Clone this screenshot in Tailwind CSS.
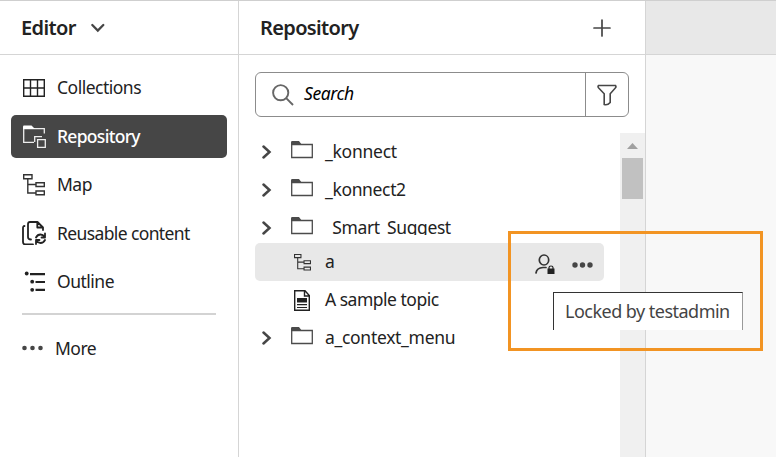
<!DOCTYPE html>
<html lang="en">
<head>
<meta charset="utf-8">
<title>Editor</title>
<script src="https://cdn.jsdelivr.net/npm/@tailwindcss/browser@4"></script>
</head>
<body class="bg-white">
<svg class="hidden">
  <symbol id="folder" viewBox="0 0 22 18"><path d="M.7 3.500V16.500H21.300V3.500Z" fill="none" stroke="#4b4b4b" stroke-width="1.300"/><path d="M0 4V1.200Q0 0 1.200 0H8L11 4Z" fill="#4b4b4b"/></symbol>
  <symbol id="chev" viewBox="0 0 10 14"><path d="M1.500 1.500L7.500 7L1.500 12.500" fill="none" stroke="#464646" stroke-width="2.500" stroke-linecap="round"/></symbol>
  <symbol id="map" viewBox="0 0 22 22"><g fill="none" stroke="#333" stroke-width="1.400"><path d="M.7.700H9V4.700H.700ZM13 8.700H21.300V12.500H13ZM13 17H21.300V20.800H13ZM4.800 4.700V19H13M4.800 10.500H13"/></g></symbol>
</svg>
<div class="relative flex h-[457px] w-[776px] overflow-hidden border-t border-[#cfcfcf] font-['Noto_Sans','Open_Sans',sans-serif] text-[17.5px] tracking-[-0.5px] text-[#222]">
  <nav class="w-[239px] shrink-0 border-r border-[#d5d5d5]">
    <header class="flex h-[54px] items-center border-b border-[#d5d5d5] pl-[21px]">
      <h1 class="w-[69px] text-[20px] font-semibold tracking-[-0.600px]">Editor</h1>
      <svg class="h-3 w-4" viewBox="0 0 16 12"><path d="M2.300 3L7.800 8.500L13.300 3" fill="none" stroke="#464646" stroke-width="2.300" stroke-linecap="round"/></svg>
    </header>
    <div class="flex flex-col gap-[5.500px] pt-[11px] pr-[11px] pl-[11px]">
      <div class="flex h-[43px] items-center gap-3 pl-3">
        <svg class="h-[18px] w-[22px]" viewBox="0 0 22 18"><path d="M.7.700H21.300V17.300H.700ZM7.500 0V18M14.500 0V18M0 9H22" fill="none" stroke="#222" stroke-width="1.400"/></svg>
        <span>Collections</span>
      </div>
      <div class="flex h-[43px] items-center gap-[11px] rounded-[5px] bg-[#464646] pl-3 text-white">
        <svg class="h-[23px] w-[23px]" viewBox="0 0 23 23"><g fill="none" stroke="#eee" stroke-width="1.300"><path d="M11 17.300H.700V3.700H21.300V8.500M11.700 17V11.700H19M14.600 14.600H22.300V22.300H14.600Z"/></g><path d="M0 4V1.500Q0 .500 1 .500H8.500L12 4Z" fill="#fff"/></svg>
        <span class="font-medium tracking-[-0.700px]">Repository</span>
      </div>
      <div class="flex h-[43px] items-center gap-3 pl-3">
        <svg class="h-[22px] w-[22px]"><use href="#map"/></svg>
        <span>Map</span>
      </div>
      <div class="flex h-[43px] items-center gap-[11px] pl-[11px]">
        <svg class="h-6 w-6" viewBox="0 0 24 24" fill="none" stroke="#222" stroke-width="1.800" stroke-linecap="round" stroke-linejoin="round"><path d="M9 18.500Q6 18.500 6 16V3Q6 1 8 1H15.500L21 6.500V9M15.300 1.500V6.500H20.500M2.500 5Q1 5 1 7V21Q1 23.500 3.500 23.500H11"/><path d="M14 16.500Q15.500 13.500 18.500 13.500Q21 13.500 22.700 16M23 12.500V16.500H19.500M23 19Q21.500 22 18.500 22Q16 22 14.200 19.500M14 23V19H17.500"/></svg>
        <span class="tracking-[-0.620px]">Reusable content</span>
      </div>
      <div class="flex h-[43px] items-center gap-3 pl-3">
        <svg class="h-[22px] w-[22px]" viewBox="0 0 22 22" fill="#222"><circle cx="3.700" cy="2.500" r="1.900"/><circle cx="9.200" cy="10.700" r="1.900"/><circle cx="9.200" cy="18.800" r="1.900"/><path d="M7 2H22V4.300H7ZM12.500 9.900H22V12.100H12.500ZM12.500 17.800H22V20H12.500Z"/></svg>
        <span>Outline</span>
      </div>
    </div>
    <div class="mt-[10px] ml-[22px] h-[2px] w-[194px] bg-[#d3d3d3]"></div>
    <div class="flex h-[66px] items-center gap-3 pl-[22px]">
      <svg class="h-[6px] w-[21px]" viewBox="0 0 21 6" fill="#464646"><circle cx="2.500" cy="3" r="2.300"/><circle cx="10.500" cy="3" r="2.300"/><circle cx="18.500" cy="3" r="2.300"/></svg>
      <span>More</span>
    </div>
  </nav>
  <main class="flex w-[407px] shrink-0 flex-col border-r border-[#d5d5d5]">
    <header class="flex h-[54px] shrink-0 items-center justify-between border-b border-[#d5d5d5] pr-[34px] pl-[21px]">
      <h2 class="text-[20px] font-semibold tracking-[-0.650px]">Repository</h2>
      <svg class="h-[18px] w-[18px]" viewBox="0 0 18 18"><path d="M9 1V17M1 9H17" stroke="#464646" stroke-width="1.700" stroke-linecap="round"/></svg>
    </header>
    <div class="mt-[17px] ml-4 flex h-[45px] w-[374px] shrink-0 rounded-[6px] border border-[#8c8c8c]">
      <div class="flex w-[330px] items-center gap-[10px] border-r border-[#8c8c8c] pl-4">
        <svg class="h-[22px] w-[22px]" viewBox="0 0 22 22" fill="none" stroke="#666" stroke-width="1.900"><circle cx="8.700" cy="8.700" r="7.600"/><path d="M14.200 14.200L21 21"/></svg>
        <span class="-mt-[2px] text-[17.500px] tracking-[-0.400px] text-black italic">Search</span>
      </div>
      <div class="flex flex-1 items-center justify-center"><svg class="h-[22px] w-5" viewBox="0 0 20 22"><path d="M1.500 1.500H18.500Q19.500 3 18.300 4L13.200 9.700V18.500Q10.500 21.500 7.200 20.500V9.700L1.700 4Q.500 2.500 1.500 1.500Z" fill="none" stroke="#464646" stroke-width="1.600"/></svg></div>
    </div>
    <div class="mt-4 flex flex-1">
      <div class="w-[381px] pl-4">
        <div class="flex h-[38px] items-center pl-[7px]"><svg class="mr-[19px] h-[14px] w-[10px]"><use href="#chev"/></svg><svg class="mr-3 mb-1 h-[18px] w-[22px]"><use href="#folder"/></svg><span class="mb-[2px] tracking-[-0.250px]">_konnect</span></div>
        <div class="flex h-[38px] items-center pl-[7px]"><svg class="mr-[19px] h-[14px] w-[10px]"><use href="#chev"/></svg><svg class="mr-3 mb-1 h-[18px] w-[22px]"><use href="#folder"/></svg><span class="mb-[2px] tracking-[-0.350px]">_konnect2</span></div>
        <div class="h-[26px] overflow-hidden"><div class="flex h-[38px] items-center pl-[7px]"><svg class="mr-[19px] h-[14px] w-[10px]"><use href="#chev"/></svg><svg class="mr-3 mb-1 h-[18px] w-[22px]"><use href="#folder"/></svg><span class="mb-[2px] tracking-[-0.400px]">_Smart_Suggest</span></div></div>
        <div class="mt-2 flex h-[38px] w-[349px] items-center rounded-[5px] bg-[#e8e8e8] pr-[11px] pl-[39px]">
          <svg class="mr-[14px] h-[17px] w-[17px]"><use href="#map"/></svg><span class="mb-[2px]">a</span>
          <svg class="mt-1 ml-auto h-5 w-5" viewBox="0 0 20 20"><g fill="none" stroke="#333" stroke-width="1.700" stroke-linecap="round"><ellipse cx="9" cy="6" rx="4.700" ry="5"/><path d="M1 19Q1.800 13.800 8 13.500H11"/></g><path d="M12.500 14.500H19.500V20H12.500Z" fill="#222"/><path d="M14 15V13.500Q14 12 16 12Q18 12 18 13.500V15" fill="none" stroke="#222" stroke-width="1.200"/></svg>
          <svg class="mt-[6px] ml-[17px] h-[6px] w-[21px]" viewBox="0 0 21 6" fill="#464646"><circle cx="3" cy="3" r="2.700"/><circle cx="10.500" cy="3" r="2.700"/><circle cx="18" cy="3" r="2.700"/></svg>
        </div>
        <div class="flex h-[38px] items-center pl-[39px]"><svg class="mr-[15px] h-[21px] w-4" viewBox="0 0 16 21"><path d="M.7.700H11L15.300 5.500V20.300H.700ZM10.500.700V6H15.300" fill="none" stroke="#222" stroke-width="1.400"/><path d="M3 8H13V12.500H3ZM3 14H13V15.200H3ZM3 16.900H13V18.100H3Z" fill="#222"/></svg><span class="mb-[2px]">A sample topic</span></div>
        <div class="flex h-[38px] items-center pl-[7px]"><svg class="mr-[19px] h-[14px] w-[10px]"><use href="#chev"/></svg><svg class="mr-3 mb-1 h-[18px] w-[22px]"><use href="#folder"/></svg><span class="mb-[2px] tracking-[-0.300px]">a_context_menu</span></div>
      </div>
      <div class="flex w-[25px] flex-col items-center bg-[#f0f0f0] pt-[10px]">
        <svg class="h-[6px] w-[11px]" viewBox="0 0 11 6"><path d="M5.500 0L11 6H0Z" fill="#a0a0a0"/></svg>
        <div class="mt-[9px] h-[41px] w-[21px] bg-[#c1c1c1]"></div>
      </div>
    </div>
  </main>
  <section class="flex-1 bg-[#f8f8f8]"><div class="h-[54px] border-b border-[#d5d5d5] bg-[#e8e8e8]"></div></section>
  <div class="absolute top-[291px] left-[553px] flex h-[38px] w-[190px] items-center border-t border-r border-l border-t-[#333] border-r-[#999] border-l-[#333] bg-white pl-[11px] text-[18px] tracking-[-0.520px] whitespace-nowrap text-[#444]">Locked by testadmin</div>
  <div class="absolute top-[230px] left-[508px] h-[120px] w-[255px] border-3 border-[#f29423]"></div>
</div>
</body>
</html>
